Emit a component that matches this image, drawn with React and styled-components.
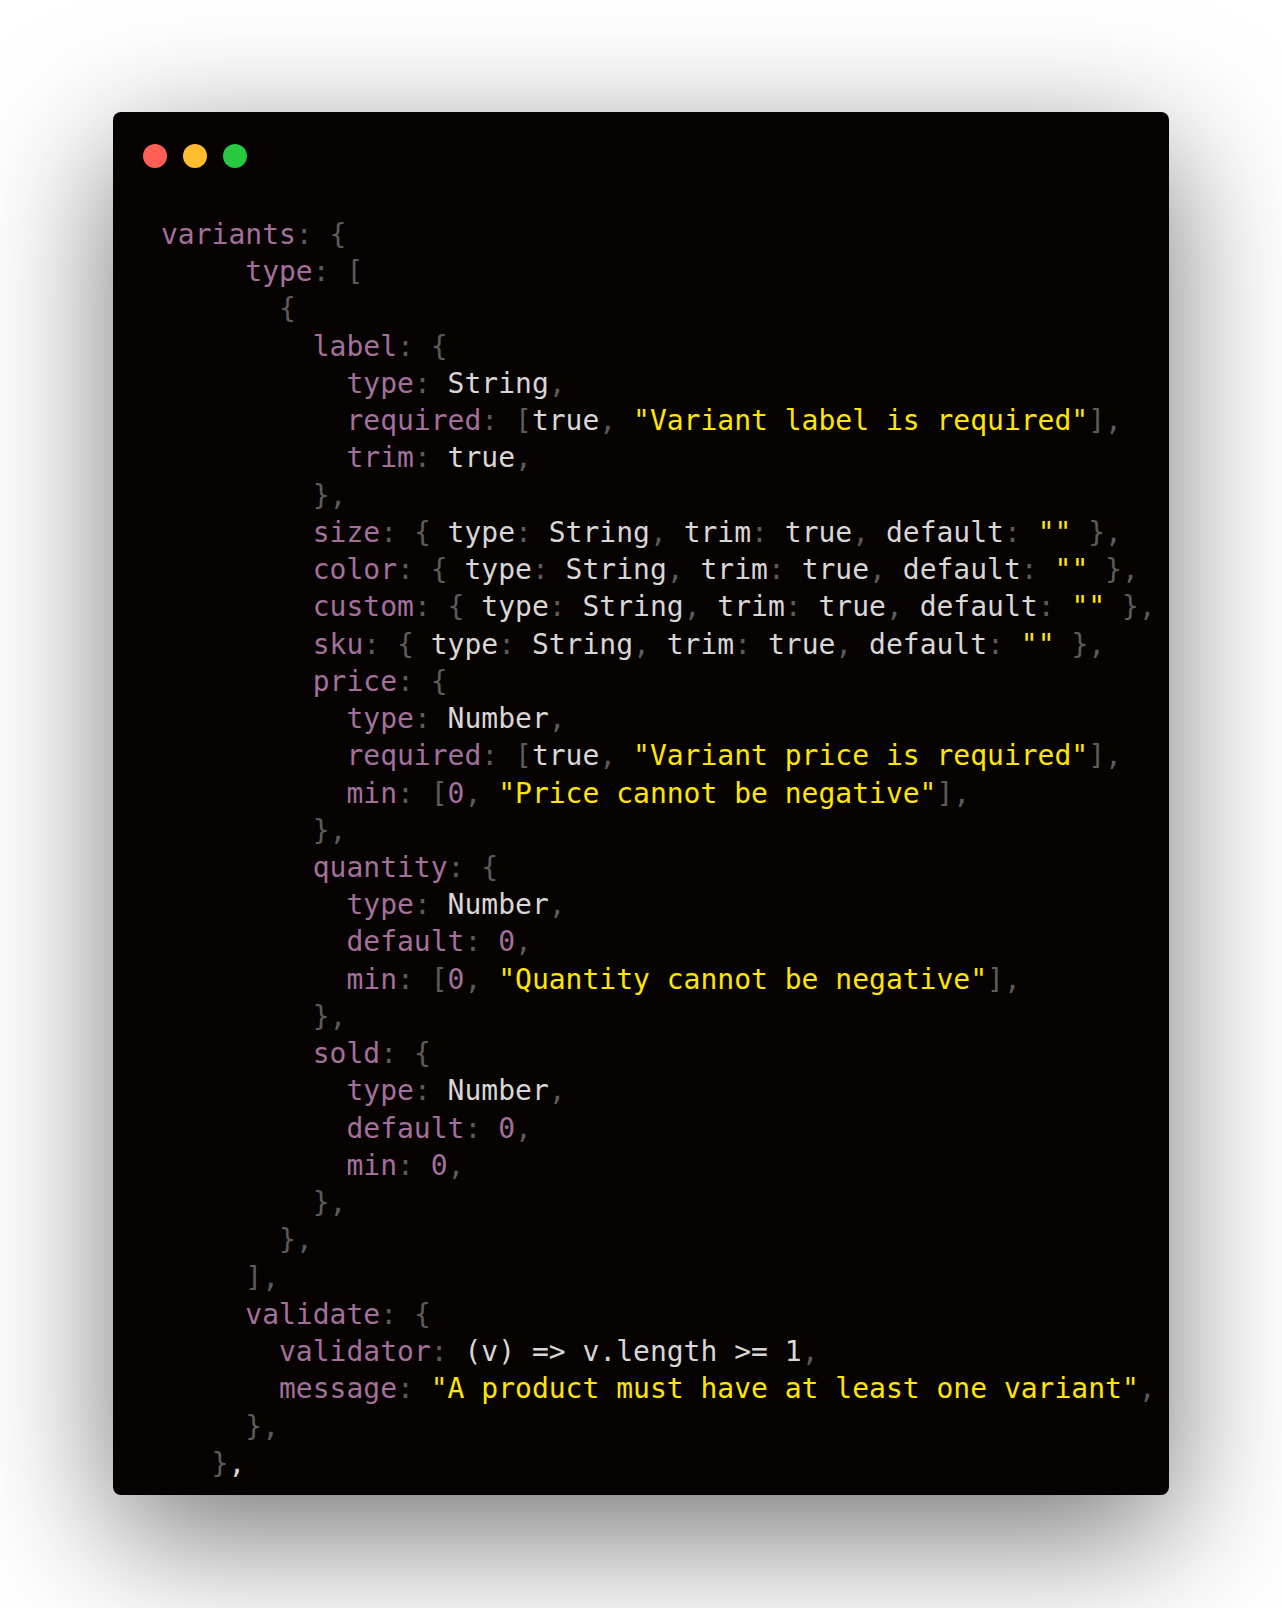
import React from "react";
import styled, { createGlobalStyle } from "styled-components";

const Global = createGlobalStyle`
  html, body { margin: 0; padding: 0; background: #ffffff; }
`;

const COLORS = {
  key: "#a3709b",
  txt: "#d9d6d6",
  str: "#ffe600",
  pun: "#5f5b5b",
  num: "#a3709b",
};

const Page = styled.div`
  padding: 112px 113px 113px;
  background: #ffffff;
`;

const Window = styled.div`
  background: #070302;
  border-radius: 8px;
  box-shadow: 0 40px 136px rgba(0, 0, 0, 0.55);
  padding: 32px 0 13px;
`;

const Controls = styled.div`
  display: flex;
  gap: 16px;
  padding-left: 30px;
  height: 24px;
`;

const Dot = styled.span`
  width: 24px;
  height: 24px;
  border-radius: 50%;
  background: ${(p) => p.$color};
`;

const Code = styled.pre`
  margin: 48px 0 0;
  padding: 0 0 0 48px;
  font-family: "DejaVu Sans Mono", monospace;
  font-size: 28px;
  line-height: 37.24px;
`;

const Line = styled.div`
  white-space: pre;
  height: 37.24px;
`;

const Tok = styled.span`
  color: ${(p) => COLORS[p.$k]};
`;

const RAW = [
  "variants: {",
  "     type: [",
  "       {",
  "         label: {",
  "           type: String,",
  '           required: [true, "Variant label is required"],',
  "           trim: true,",
  "         },",
  '         size: { type: String, trim: true, default: "" },',
  '         color: { type: String, trim: true, default: "" },',
  '         custom: { type: String, trim: true, default: "" },',
  '         sku: { type: String, trim: true, default: "" },',
  "         price: {",
  "           type: Number,",
  '           required: [true, "Variant price is required"],',
  '           min: [0, "Price cannot be negative"],',
  "         },",
  "         quantity: {",
  "           type: Number,",
  "           default: 0,",
  '           min: [0, "Quantity cannot be negative"],',
  "         },",
  "         sold: {",
  "           type: Number,",
  "           default: 0,",
  "           min: 0,",
  "         },",
  "       },",
  "     ],",
  "     validate: {",
  "       validator: (v) => v.length >= 1,",
  '       message: "A product must have at least one variant",',
  "     },",
];

function tokenize(line) {
  const re = /("[^"]*")|([A-Za-z_]\w*)(?=:)|(\d+)|([{}\[\],:])|(\s+)|([^\s"{}\[\],:]+)/g;
  const out = [];
  const isArrow = line.includes("=>");
  let seenKey = false;
  let m;
  while ((m = re.exec(line))) {
    if (m[1]) out.push(["str", m[1]]);
    else if (m[2]) {
      out.push([seenKey ? "txt" : "key", m[2]]);
      seenKey = true;
    } else if (m[3]) out.push([isArrow ? "txt" : "num", m[3]]);
    else if (m[4]) out.push(["pun", m[4]]);
    else if (m[5]) out.push(["txt", m[5]]);
    else out.push(["txt", m[6]]);
  }
  return out;
}

const LINES = [
  ...RAW.map(tokenize),
  [
    ["txt", "   "],
    ["pun", "}"],
    ["txt", ","],
  ],
];

export default function App() {
  return (
    <>
      <Global />
      <Page>
        <Window>
          <Controls>
            <Dot $color="#ff5f56" />
            <Dot $color="#ffbd2e" />
            <Dot $color="#27c93f" />
          </Controls>
          <Code>
            {LINES.map((toks, i) => (
              <Line key={i}>
                {toks.map(([k, t], j) => (
                  <Tok key={j} $k={k}>
                    {t}
                  </Tok>
                ))}
              </Line>
            ))}
          </Code>
        </Window>
      </Page>
    </>
  );
}
